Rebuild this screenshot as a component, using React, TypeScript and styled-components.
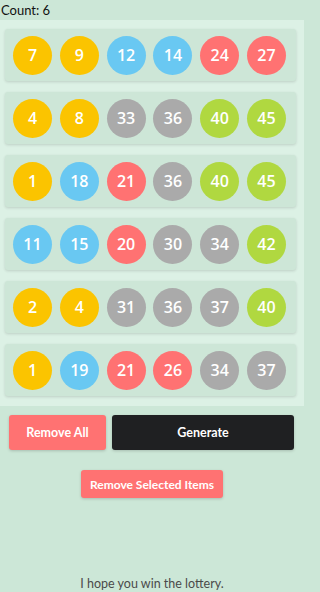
import styled, { createGlobalStyle } from 'styled-components';

const GlobalStyle = createGlobalStyle`
  html, body {
    margin: 0;
    padding: 0;
    overflow: hidden;
    background-color: #cce7d7;
    font-family: Lato, 'Noto Sans', sans-serif;
  }
  * {
    box-sizing: border-box;
  }
`;

const ROWS: number[][] = [
  [7, 9, 12, 14, 24, 27],
  [4, 8, 33, 36, 40, 45],
  [1, 18, 21, 36, 40, 45],
  [11, 15, 20, 30, 34, 42],
  [2, 4, 31, 36, 37, 40],
  [1, 19, 21, 26, 34, 37],
];

const BALL_COLORS = ['#fbc400', '#69c8f2', '#ff7272', '#aaaaaa', '#b0d840'];

const ballColor = (n: number) => BALL_COLORS[Math.min(Math.floor(n / 10), 4)];

const App = () => {
  return (
    <>
      <GlobalStyle />
      <Page>
        <CountText>Count: {ROWS.length}</CountText>
        <List>
          {ROWS.map((row, i) => (
            <Card key={i}>
              {row.map((n) => (
                <Ball key={n} $color={ballColor(n)}>
                  {n}
                </Ball>
              ))}
            </Card>
          ))}
        </List>
        <ButtonRow>
          <ActionButton $variant='danger' $grow={1}>
            Remove All
          </ActionButton>
          <ActionButton $variant='dark' $grow={2}>
            Generate
          </ActionButton>
        </ButtonRow>
        <CenterRow>
          <SmallButton>Remove Selected Items</SmallButton>
        </CenterRow>
        <Footer>I hope you win the lottery.</Footer>
      </Page>
    </>
  );
};

export default App;

const Page = styled.div`
  display: flex;
  flex-direction: column;
  width: 304px;
  height: 592px;
`;

const CountText = styled.div`
  height: 20px;
  padding-left: 1px;
  font-size: 13px;
  line-height: 20px;
  color: #111;
`;

const List = styled.div`
  display: flex;
  flex-direction: column;
  gap: 11px;
  padding: 9px 8px 10px 5px;
  background-color: #dcf1e5;
`;

const Card = styled.div`
  display: flex;
  align-items: center;
  justify-content: space-between;
  height: 52px;
  padding: 0 10px 0 8px;
  border-radius: 3px;
  background-color: #cde6d7;
  box-shadow: 0 1px 3px rgba(0, 0, 0, 0.14);
`;

const Ball = styled.div<{ $color: string }>`
  display: flex;
  align-items: center;
  justify-content: center;
  width: 39px;
  height: 39px;
  border-radius: 50%;
  background-color: ${({ $color }) => $color};
  color: #fff;
  font-family: 'Open Sans', Lato, sans-serif;
  font-size: 16px;
  font-weight: 600;
`;

const ButtonRow = styled.div`
  display: flex;
  gap: 6px;
  margin-top: 9px;
  padding: 0 10px 0 9px;
`;

const ActionButton = styled.button<{ $variant: 'danger' | 'dark'; $grow: number }>`
  flex: ${({ $grow }) => $grow};
  height: 35px;
  border: none;
  border-radius: 3px;
  background-color: ${({ $variant }) => ($variant === 'danger' ? '#ff7272' : '#1f2022')};
  color: #fff;
  font-family: Lato, 'Noto Sans', sans-serif;
  font-size: 12.5px;
  font-weight: 700;
  box-shadow: 0 1px 3px rgba(0, 0, 0, 0.18);
`;

const CenterRow = styled.div`
  display: flex;
  justify-content: center;
  margin-top: 20px;
`;

const SmallButton = styled.button`
  width: 142px;
  height: 28px;
  border: none;
  border-radius: 3px;
  background-color: #ff7272;
  color: #fff;
  font-family: Lato, 'Noto Sans', sans-serif;
  font-size: 12px;
  font-weight: 700;
  box-shadow: 0 1px 3px rgba(0, 0, 0, 0.18);
`;

const Footer = styled.div`
  margin-top: auto;
  padding-bottom: 1px;
  text-align: center;
  font-size: 12.5px;
  font-weight: 400;
  color: #4a4a4a;
  line-height: 14px;
`;
